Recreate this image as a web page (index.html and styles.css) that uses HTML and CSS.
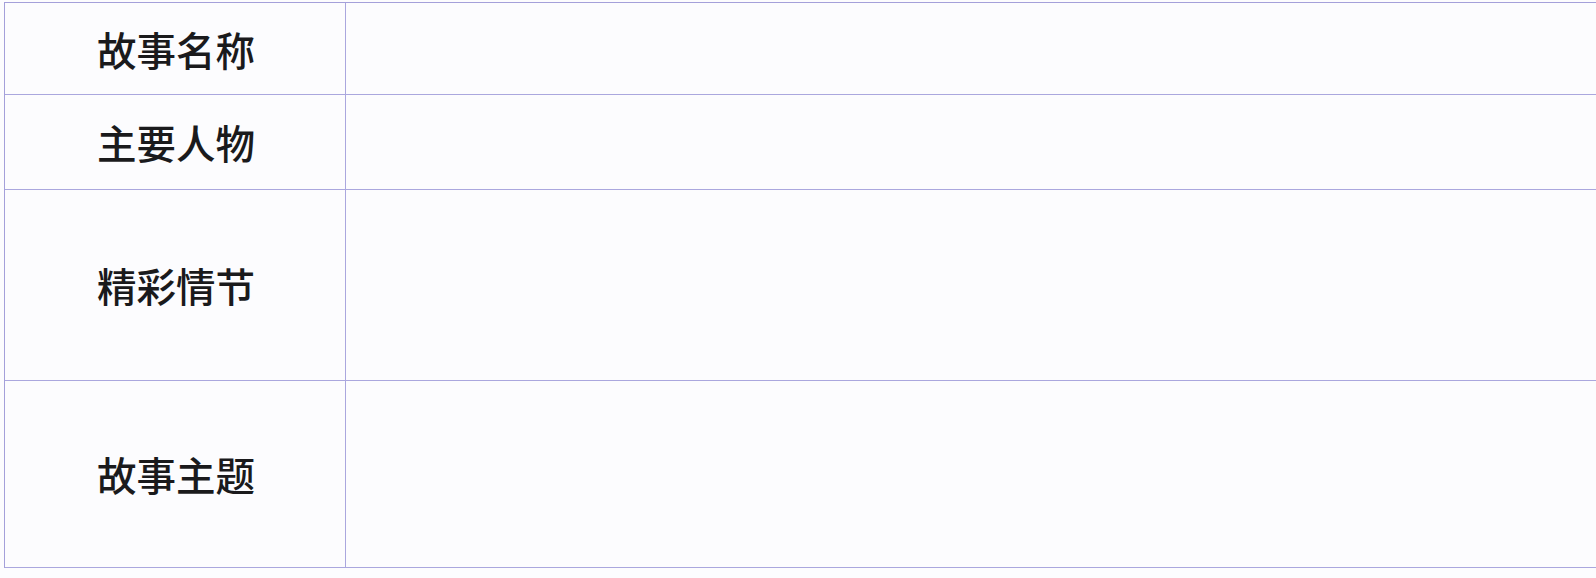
FILE: index.html
```html
<!DOCTYPE html>
<html lang="zh">
<head>
<meta charset="utf-8">
<title>故事</title>
<link rel="stylesheet" href="styles.css">
</head>
<body>
<div class="sheet">
  <div class="label">故事名称</div><div class="field"></div>
  <div class="label">主要人物</div><div class="field"></div>
  <div class="label">精彩情节</div><div class="field"></div>
  <div class="label">故事主题</div><div class="field"></div>
</div>
</body>
</html>
```
FILE: styles.css
```css
html, body {
  margin: 0;
  padding: 0;
  background: #fcfcfe;
  overflow: hidden;
}
body {
  width: 1596px;
  height: 578px;
  font-family: "Noto Sans CJK SC", "Noto Sans", sans-serif;
  color: #1a1a1c;
}
.sheet {
  margin: 2px 0 0 4px;
  display: grid;
  grid-template-columns: 341px 1fr;
  grid-template-rows: 92px 95px 191px 187px;
  border-top: 1px solid #a4a0da;
  border-left: 1px solid #a4a0da;
}
.label {
  display: flex;
  align-items: center;
  justify-content: center;
  font-size: 39.5px;
  font-weight: 500;
  line-height: 1;
  border-right: 1px solid #aaa7de;
  border-bottom: 1px solid #aaa7de;
  padding-left: 2px;
}
.field {
  border-bottom: 1px solid #aaa7de;
}
```
